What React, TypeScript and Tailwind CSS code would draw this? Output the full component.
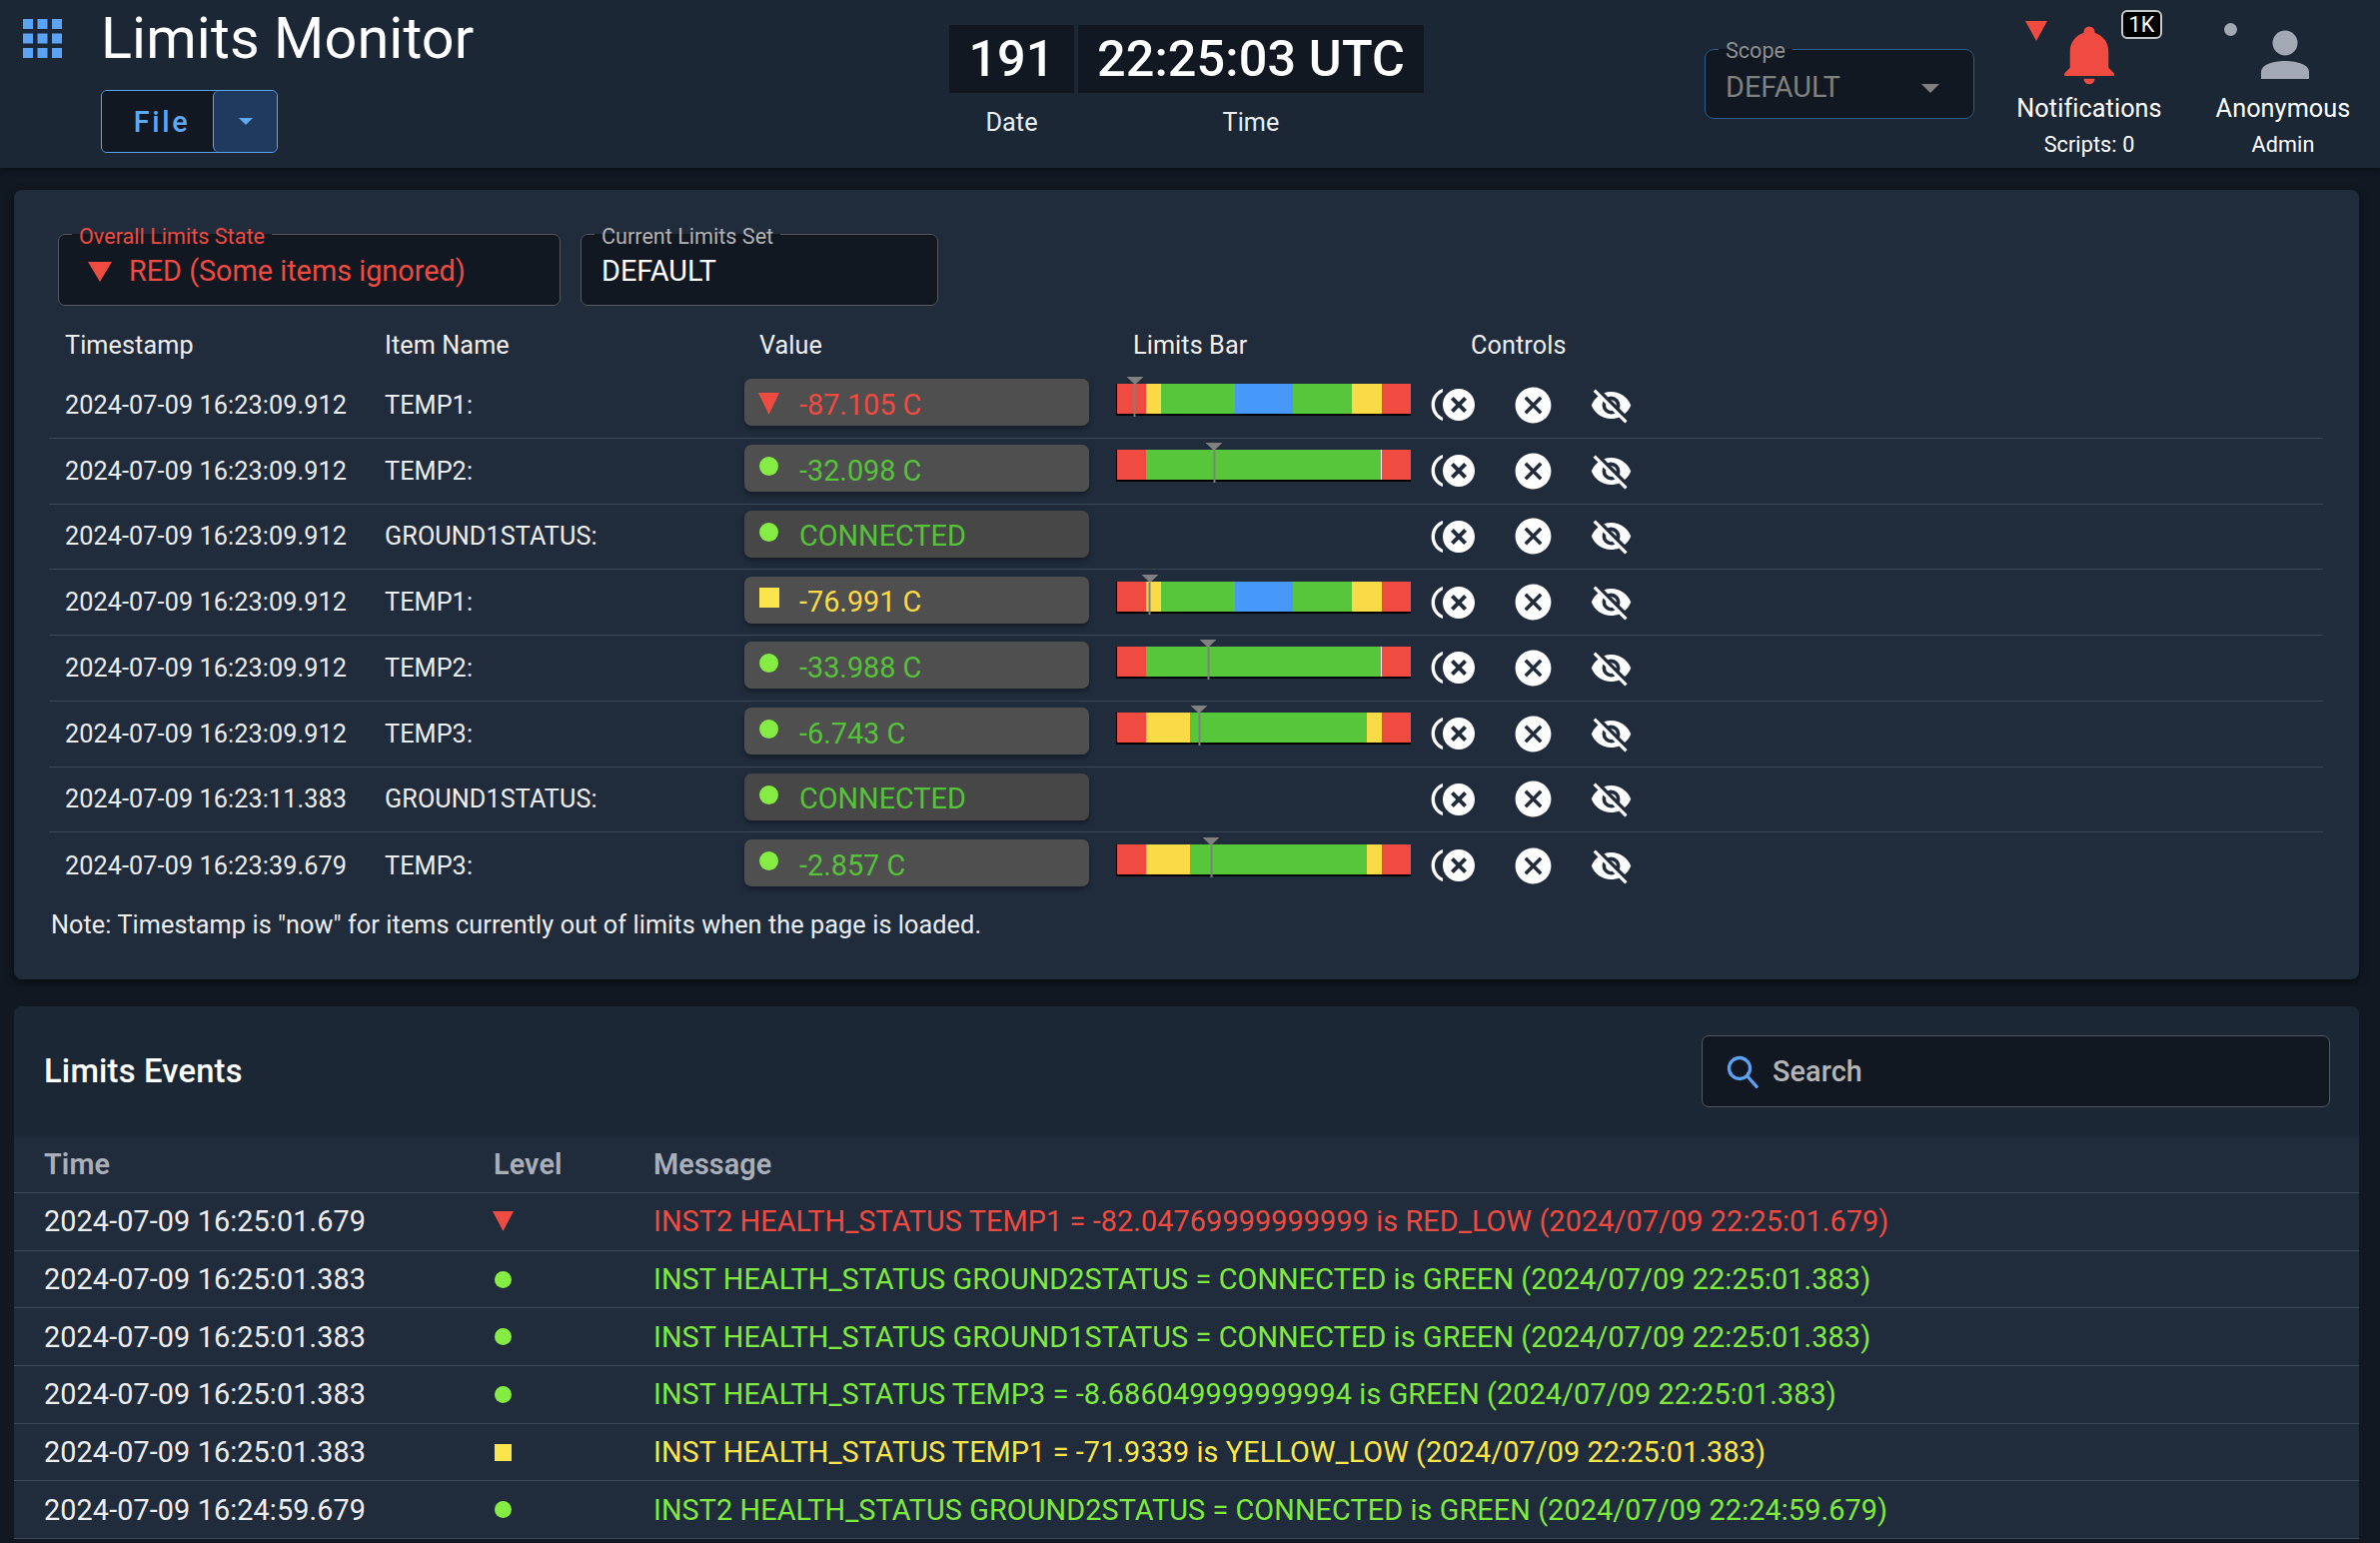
import React from "react";

const closeCircle =
  "M12,2C17.53,2 22,6.47 22,12C22,17.53 17.53,22 12,22C6.47,22 2,17.53 2,12C2,6.47 6.47,2 12,2M15.59,7L12,10.59L8.41,7L7,8.41L10.59,12L7,15.59L8.41,17L12,13.41L15.59,17L17,15.59L13.41,12L17,8.41L15.59,7Z";
const closeMultiple =
  "M14,4C18.42,4 22,7.58 22,12C22,16.42 18.42,20 14,20C9.58,20 6,16.42 6,12C6,7.58 9.58,4 14,4M16.6,8L14,10.6L11.4,8L10,9.4L12.6,12L10,14.6L11.4,16L14,13.4L16.6,16L18,14.6L15.4,12L18,9.4L16.6,8M2,12C2,9.21 3.64,6.8 6,5.68V4C2.5,5.26 0.3,8.3 0.3,12C0.3,15.7 2.5,18.74 6,20V18.32C3.64,17.2 2,14.79 2,12Z";
const eyeOff =
  "M11.83,9L15,12.16C15,12.11 15,12.05 15,12A3,3 0 0,0 12,9C11.94,9 11.89,9 11.83,9M7.53,9.8L9.08,11.35C9.03,11.56 9,11.77 9,12A3,3 0 0,0 12,15C12.22,15 12.44,14.97 12.65,14.92L14.2,16.47C13.53,16.8 12.79,17 12,17A5,5 0 0,1 7,12C7,11.21 7.2,10.47 7.53,9.8M2,4.27L4.28,6.55L4.73,7C3.08,8.3 1.78,10 1,12C2.73,16.39 7,19.5 12,19.5C13.55,19.5 15.03,19.2 16.38,18.66L16.81,19.08L19.73,22L21,20.73L3.27,3M12,7A5,5 0 0,1 17,12C17,12.64 16.87,13.26 16.64,13.82L19.57,16.75C21.07,15.5 22.27,13.86 23,12C21.27,7.61 17,4.5 12,4.5C10.6,4.5 9.26,4.75 8,5.2L10.17,7.35C10.74,7.13 11.35,7 12,7Z";
const bell =
  "M21,19V20H3V19L5,17V11C5,7.9 7.03,5.17 10,4.29C10,4.19 10,4.1 10,4A2,2 0 0,1 12,2A2,2 0 0,1 14,4C14,4.1 14,4.19 14,4.29C16.97,5.17 19,7.9 19,11V17L21,19M14,21A2,2 0 0,1 12,23A2,2 0 0,1 10,21";

type Level = "red" | "green" | "yellow";
const R = "#ef4b40", Y = "#fadb47", G = "#58c63b", B = "#4799f9";
type Seg = [string, number];
const tempA: Seg[] = [[R, 10], [Y, 5], [G, 25], [B, 20], [G, 20], [Y, 10], [R, 10]];
const tempB: Seg[] = [[R, 10], [G, 79.7], ["#ffffff", 0.3], [R, 10]];
const tempC: Seg[] = [[R, 10], [Y, 15], [G, 60], [Y, 5], [R, 10]];

const rows: { ts: string; name: string; level: Level; value: string; bar?: Seg[]; mark?: number; dim?: boolean }[] = [
  { ts: "2024-07-09 16:23:09.912", name: "TEMP1:", level: "red", value: "-87.105 C", bar: tempA, mark: 6 },
  { ts: "2024-07-09 16:23:09.912", name: "TEMP2:", level: "green", value: "-32.098 C", bar: tempB, mark: 33 },
  { ts: "2024-07-09 16:23:09.912", name: "GROUND1STATUS:", level: "green", value: "CONNECTED", dim: true },
  { ts: "2024-07-09 16:23:09.912", name: "TEMP1:", level: "yellow", value: "-76.991 C", bar: tempA, mark: 11.2 },
  { ts: "2024-07-09 16:23:09.912", name: "TEMP2:", level: "green", value: "-33.988 C", bar: tempB, mark: 31 },
  { ts: "2024-07-09 16:23:09.912", name: "TEMP3:", level: "green", value: "-6.743 C", bar: tempC, mark: 28 },
  { ts: "2024-07-09 16:23:11.383", name: "GROUND1STATUS:", level: "green", value: "CONNECTED", dim: true },
  { ts: "2024-07-09 16:23:39.679", name: "TEMP3:", level: "green", value: "-2.857 C", bar: tempC, mark: 32 },
];

const events: { time: string; level: Level; msg: string }[] = [
  { time: "2024-07-09 16:25:01.679", level: "red", msg: "INST2 HEALTH_STATUS TEMP1 = -82.04769999999999 is RED_LOW (2024/07/09 22:25:01.679)" },
  { time: "2024-07-09 16:25:01.383", level: "green", msg: "INST HEALTH_STATUS GROUND2STATUS = CONNECTED is GREEN (2024/07/09 22:25:01.383)" },
  { time: "2024-07-09 16:25:01.383", level: "green", msg: "INST HEALTH_STATUS GROUND1STATUS = CONNECTED is GREEN (2024/07/09 22:25:01.383)" },
  { time: "2024-07-09 16:25:01.383", level: "green", msg: "INST HEALTH_STATUS TEMP3 = -8.686049999999994 is GREEN (2024/07/09 22:25:01.383)" },
  { time: "2024-07-09 16:25:01.383", level: "yellow", msg: "INST HEALTH_STATUS TEMP1 = -71.9339 is YELLOW_LOW (2024/07/09 22:25:01.383)" },
  { time: "2024-07-09 16:24:59.679", level: "green", msg: "INST2 HEALTH_STATUS GROUND2STATUS = CONNECTED is GREEN (2024/07/09 22:24:59.679)" },
];

function Tri({ w = 21, h = 20, color = "#ef4b40" }: { w?: number; h?: number; color?: string }) {
  return (
    <svg width={w} height={h} viewBox="0 0 10 10" preserveAspectRatio="none" className="block shrink-0">
      <polygon points="0,0 10,0 5,10" fill={color} />
    </svg>
  );
}

function EventIcon({ level }: { level: Level }) {
  if (level === "red") return <Tri />;
  if (level === "green") return <div className="w-[17px] h-[17px] rounded-full bg-[#84ec42]" />;
  return <div className="w-[17px] h-[17px] bg-[#fce54c]" />;
}

function ValueIcon({ level }: { level: Level }) {
  if (level === "red") return <div className="translate-y-[1px]"><Tri w={21} h={22} /></div>;
  if (level === "green") return <div className="w-[19px] h-[19px] rounded-full bg-[#84ec42] -translate-y-[2px]" />;
  return <div className="w-[20px] h-[20px] bg-[#fce54c] -translate-y-[2px]" />;
}

function Mdi({ d, size, className }: { d: string; size: number; className?: string }) {
  return (
    <svg width={size} height={size} viewBox="0 0 24 24" className={className}>
      <path d={d} fill="currentColor" />
    </svg>
  );
}

function LimitsBar({ segs, mark }: { segs: Seg[]; mark: number }) {
  return (
    <div className="relative w-[295px] h-[32px] flex border-l border-b-2 border-black mb-[10px]">
      {segs.map((s, i) => (
        <div key={i} style={{ width: `${s[1]}%`, background: s[0] }} />
      ))}
      <div className="absolute top-[-7px] -translate-x-1/2 flex flex-col items-center" style={{ left: `${mark}%` }}>
        <Tri w={17} h={8} color="#808080" />
        <div className="w-[2px] h-[32px] bg-[#808080]" />
      </div>
    </div>
  );
}

const textColor: Record<Level, string> = {
  red: "text-[#ef4b40]",
  green: "text-[#56c23a]",
  yellow: "text-[#fadb47]",
};
const eventColor: Record<Level, string> = {
  red: "text-[#ef4b40]",
  green: "text-[#7fe93f]",
  yellow: "text-[#fbe64a]",
};

function ValueBox({ level, value, dim }: { level: Level; value: string; dim?: boolean }) {
  return (
    <div
      className={`w-[345px] h-[47px] rounded-[7px] flex items-center pl-[14px] mb-[5px] shadow-[0_3px_5px_rgba(0,0,0,0.35)] ${
        dim ? "bg-[#474747]" : "bg-[#4f4f4f]"
      }`}
    >
      <div className="w-[21px] flex justify-center">
        <ValueIcon level={level} />
      </div>
      <span className={`ml-[20px] pt-[5px] text-[28.8px] tracking-normal leading-none ${textColor[level]}`}>{value}</span>
    </div>
  );
}

function Boxed({ label, labelClass, children, className }: { label: string; labelClass?: string; children: React.ReactNode; className: string }) {
  return (
    <fieldset className={`border border-[#55595f] rounded-[7px] bg-[#111822] h-[81px] tracking-normal ${className}`}>
      <legend className={`relative top-[2px] ml-[13px] px-[7px] text-[21.6px] leading-[19px] ${labelClass ?? "text-[#b3b3b3]"}`}>{label}</legend>
      {children}
    </fieldset>
  );
}

export default function App() {
  return (
    <div className="[font-family:Roboto,sans-serif] tracking-[0.1px] w-[2382px] h-[1544px] overflow-hidden bg-[#111822] text-[#eeeeee]">
      {/* top bar */}
      <header className="h-[168px] bg-[#1b2735] flex relative shadow-[0_2px_6px_rgba(0,0,0,0.4)]">
        <div className="w-[950px] flex pl-[23px]">
          <svg width="39" height="39" viewBox="0 0 39 39" className="mt-[19px] shrink-0">
            {[0, 14.5, 29].map((y) =>
              [0, 14.5, 29].map((x) => <rect key={`${x}-${y}`} x={x} y={y} width="10" height="10" fill="#5ba3f5" />)
            )}
          </svg>
          <div className="ml-[39px] flex flex-col">
            <h1 className="text-[57.6px] leading-[76px] pt-[1px] font-normal text-white whitespace-nowrap">Limits Monitor</h1>
            <div className="mt-[13px] flex w-[177px] h-[63px] rounded-[6px] border border-[#5aa3f5] overflow-hidden">
              <div className="w-[111px] bg-[#111822] flex items-center justify-center pl-[9px] pt-[2px] text-[#5fa8f5] text-[28.8px] font-medium tracking-[2.6px]">File</div>
              <div className="flex-1 bg-[#1f3a5c] border border-y-0 border-r-0 border-[#5aa3f5] rounded-[6px] flex items-center justify-center">
                <Tri w={14} h={7} color="#5fa8f5" />
              </div>
            </div>
          </div>
        </div>

        <div className="w-[475px] pt-[25px] flex gap-[4px]">
          <div className="w-[125px] flex flex-col items-center">
            <div className="w-full h-[68px] bg-[#111822] flex items-center justify-center text-[50.4px] font-medium text-white">191</div>
            <div className="mt-[14px] text-[25.2px] leading-[32px]">Date</div>
          </div>
          <div className="w-[346px] flex flex-col items-center">
            <div className="w-full h-[68px] bg-[#111822] flex items-center justify-center text-[50.4px] font-medium text-white">22:25:03 UTC</div>
            <div className="mt-[14px] text-[25.2px] leading-[32px]">Time</div>
          </div>
        </div>

        <div className="ml-[281px] w-[270px] pt-[38px]">
          <fieldset className="h-[81px] border border-[#2f5a8f] rounded-[9px] bg-[#111822] flex tracking-normal">
            <legend className="relative top-[2px] ml-[13px] px-[7px] text-[21.6px] leading-[22px] text-[#8e8e8e]">Scope</legend>
            <div className="flex items-center h-[56px] pl-[20px] text-[28.8px] text-[#808080]">
              DEFAULT
              <div className="ml-[81px]">
                <Tri w={18} h={9} color="#808080" />
              </div>
            </div>
          </fieldset>
        </div>

        <div className="ml-[25px] w-[180px] relative flex flex-col items-center">
          <div className="absolute left-[26px] top-[21px]">
            <Tri w={22} h={20} />
          </div>
          <Mdi d={bell} size={66} className="text-[#ef4b40] mt-[21px]" />
          <div className="absolute left-[122px] top-[10px] w-[41px] h-[29px] bg-black border-2 border-[#c8c8c8] rounded-[6px] flex items-center justify-center text-white text-[21.6px] leading-none">1K</div>
          <div className="text-[25.2px] leading-[32px] text-white mt-[6px]">Notifications</div>
          <div className="text-[21.6px] leading-[26px] text-white mt-[7px]">Scripts: 0</div>
        </div>

        <div className="ml-[14px] w-[180px] relative flex flex-col items-center">
          <div className="absolute left-[31px] top-[23px] w-[13px] h-[13px] rounded-full bg-[#a2a9b5]" />
          <svg width="50" height="50" viewBox="0 0 50 50" className="mt-[30px] mb-[13px] translate-x-[2px]">
            <ellipse cx="25" cy="13" rx="12.5" ry="12.5" fill="#a2a9b5" />
            <path d="M1,49V42C1,35 12,31 25,31C38,31 49,35 49,42V49Z" fill="#a2a9b5" />
          </svg>
          <div className="text-[25.2px] leading-[32px] text-white">Anonymous</div>
          <div className="text-[21.6px] leading-[26px] text-white mt-[7px]">Admin</div>
        </div>
      </header>

      {/* limits panel */}
      <section className="mt-[22px] mx-[14px] w-[2347px] h-[790px] bg-[#202c3c] rounded-[8px] pt-[35px] shadow-[0_3px_8px_rgba(0,0,0,0.5)]">
        <div className="flex gap-[20px] pl-[44px]">
          <Boxed label="Overall Limits State" labelClass="text-[#ef4b40]" className="w-[503px]">
            <div className="flex items-center h-[56px] pl-[29px] text-[28.8px] text-[#ef4b40]">
              <Tri w={24} h={20} />
              <span className="ml-[17px]">RED (Some items ignored)</span>
            </div>
          </Boxed>
          <Boxed label="Current Limits Set" className="w-[358px]">
            <div className="flex items-center h-[56px] pl-[20px] text-[28.8px] text-white">DEFAULT</div>
          </Boxed>
        </div>

        <div className="mx-[35px] mt-[15px] w-[2276px]">
          <div className="flex h-[52px] items-center text-[25.2px] pb-[2px] text-[#eeeeee]">
            <div className="w-[336px] pl-[16px]">Timestamp</div>
            <div className="w-[375px]">Item Name</div>
            <div className="w-[374px]">Value</div>
            <div className="w-[338px]">Limits Bar</div>
            <div>Controls</div>
          </div>
          {rows.map((r, i) => (
            <div key={i} className={`flex h-[65.75px] items-center text-[25.2px] text-[#eeeeee] ${i < rows.length - 1 ? "border-b border-[#3a4757]" : ""}`}>
              <div className="w-[336px] pl-[16px] pt-[1px] whitespace-nowrap">{r.ts}</div>
              <div className="w-[360px] pt-[1px]">{r.name}</div>
              <div className="w-[372px]">
                <ValueBox level={r.level} value={r.value} dim={r.dim} />
              </div>
              <div className="w-[315px]">{r.bar && r.mark !== undefined && <LimitsBar segs={r.bar} mark={r.mark} />}</div>
              <div className="flex items-center text-white">
                <div className="w-[83px]"><Mdi d={closeMultiple} size={48} /></div>
                <div className="w-[78px] -ml-[2px]"><Mdi d={closeCircle} size={43} /></div>
                <Mdi d={eyeOff} size={43} />
              </div>
            </div>
          ))}
          <p className="mt-[11px] pl-[2px] text-[25.2px] leading-[32px] text-[#eeeeee]">Note: Timestamp is "now" for items currently out of limits when the page is loaded.</p>
        </div>
      </section>

      {/* events panel */}
      <section className="mt-[27px] mx-[14px] w-[2347px] rounded-t-[8px] overflow-hidden bg-[#202c3c]">
        <div className="h-[130px] bg-[#1b2735] flex items-center justify-between pl-[30px] pr-[29px]">
          <h2 className="text-[32.7px] pt-[2px] tracking-[0.2px] font-medium text-white">Limits Events</h2>
          <div className="w-[629px] h-[72px] rounded-[7px] border border-[#55595f] bg-[#111822] flex items-center pl-[22px] text-[28.8px] font-medium text-[#b5b5b5]">
            <svg width="36" height="36" viewBox="0 0 24 24" fill="none" stroke="#5ba3f5" strokeWidth="2.2">
              <circle cx="10" cy="10" r="7" />
              <line x1="15" y1="15" x2="22" y2="23" />
            </svg>
            <span className="ml-[12px] pt-[2px]">Search</span>
          </div>
        </div>
        <div className="flex h-[57px] items-center border-b border-[#3a4757] pt-[1px] text-[28.8px] font-semibold text-[#a9aeb8] pl-[30px]">
          <div className="w-[450px]">Time</div>
          <div className="w-[160px]">Level</div>
          <div>Message</div>
        </div>
        {events.map((e, i) => (
          <div key={i} className="flex h-[57.7px] items-center border-b border-[#3a4757] text-[28.8px] pl-[30px]">
            <div className="w-[449px] pt-[1px] text-[#eeeeee] whitespace-nowrap">{e.time}</div>
            <div className="w-[161px]">
              <div className="w-[21px] flex justify-center"><EventIcon level={e.level} /></div>
            </div>
            <div className={`whitespace-nowrap pt-[1px] ${eventColor[e.level]}`}>{e.msg}</div>
          </div>
        ))}
      </section>
    </div>
  );
}
